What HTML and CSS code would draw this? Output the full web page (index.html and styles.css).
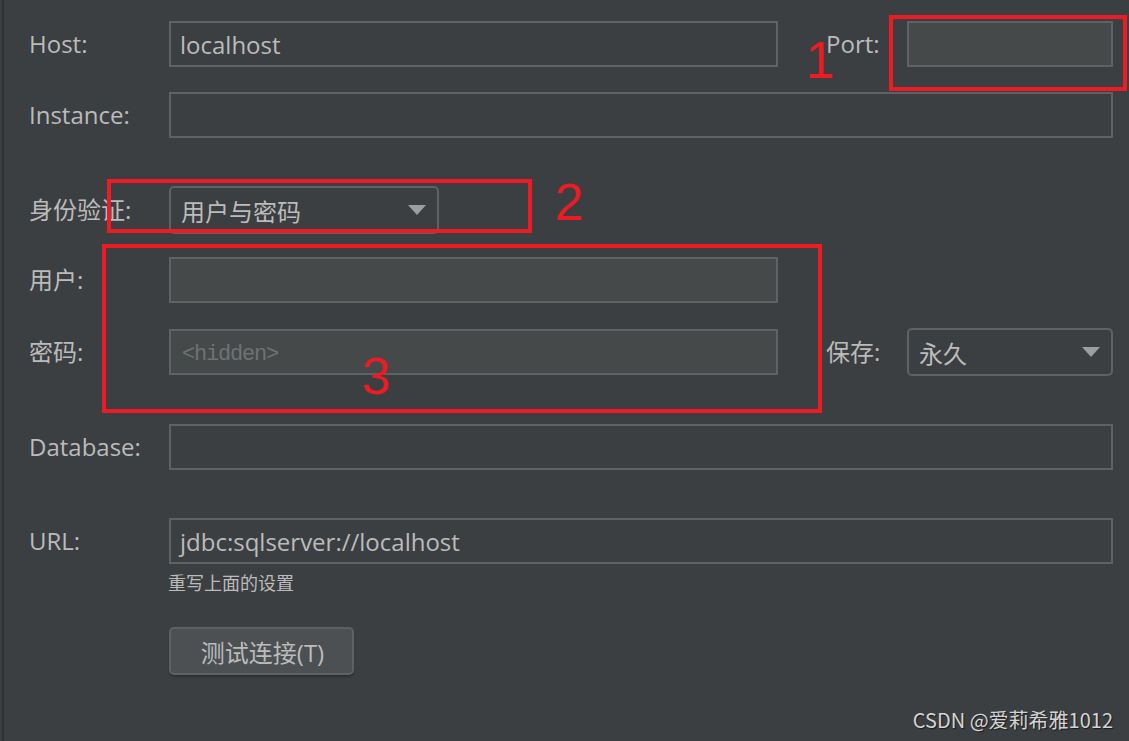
FILE: index.html
```html
<!DOCTYPE html>
<html lang="zh">
<head>
<meta charset="utf-8">
<title>Data source</title>
<link rel="stylesheet" href="styles.css">
</head>
<body>
<div class="panel">
  <div class="row">
    <div class="label">Host:</div>
    <div class="field">localhost</div>
    <div class="label label-right">Port:</div>
    <div class="field field-off"></div>
  </div>
  <div class="row row-near">
    <div class="label">Instance:</div>
    <div class="field span3"></div>
  </div>
  <div class="row row-far">
    <div class="label">身份验证:</div>
    <div class="combo combo-auth">用户与密码<span class="arrow"></span></div>
  </div>
  <div class="row row-near">
    <div class="label">用户:</div>
    <div class="field field-off"></div>
  </div>
  <div class="row row-near">
    <div class="label">密码:</div>
    <div class="field field-off"><span class="placeholder">&lt;hidden&gt;</span></div>
    <div class="label label-right">保存:</div>
    <div class="combo">永久<span class="arrow"></span></div>
  </div>
  <div class="row row-far2">
    <div class="label">Database:</div>
    <div class="field span3"></div>
  </div>
  <div class="row row-far">
    <div class="label">URL:</div>
    <div class="field span3">jdbc:sqlserver://localhost</div>
  </div>
  <div class="hint">重写上面的设置</div>
  <div class="actions">
    <button class="btn" type="button">测试连接(T)</button>
  </div>
</div>

<div class="mark mark-1"></div>
<div class="num num-1">1</div>
<div class="mark mark-2"></div>
<div class="num num-2">2</div>
<div class="mark mark-3"></div>
<div class="num num-3">3</div>

<div class="watermark">CSDN @爱莉希雅1012</div>
</body>
</html>
```

FILE: styles.css
```css
html, body {
  margin: 0;
  padding: 0;
  background: #3c3f41;
  height: 100%;
  overflow: hidden;
}

body {
  font-family: "Open Sans", "Noto Sans CJK SC", sans-serif;
  color: #bbbbbb;
  font-size: 24px;
  position: relative;
}

.panel {
  margin-left: 2px;
  border-left: 2px solid #303234;
  min-height: 741px;
  box-sizing: border-box;
  padding: 21px 0 0 25px;
}

.row {
  display: grid;
  grid-template-columns: 140px 609px 129px 206px;
  align-items: center;
  height: 46px;
}

.row-near { margin-top: 25px; }
.row-far { margin-top: 48px; }
.row-far2 { margin-top: 50px; }

.label {
  white-space: nowrap;
  line-height: 30px;
}

.label-right {
  padding-left: 48px;
}

.field {
  height: 46px;
  box-sizing: border-box;
  border: 2px solid #5f6162;
  background: #3c3f41;
  padding: 0 9px;
  display: flex;
  align-items: center;
  white-space: nowrap;
}

.field-off {
  background: #45494a;
}

.span3 {
  grid-column: 2 / 5;
}

.placeholder {
  font-family: "Liberation Mono", "DejaVu Sans Mono", monospace;
  font-size: 22px;
  letter-spacing: -1.2px;
  color: #6f7274;
  padding-left: 2px;
  padding-top: 4px;
}

.combo {
  height: 48px;
  box-sizing: border-box;
  border: 2px solid #5f6162;
  border-radius: 5px;
  background: #3c3f41;
  padding: 0 10px;
  display: flex;
  align-items: center;
  justify-content: space-between;
}

.combo-auth {
  width: 270px;
}

.arrow {
  width: 0;
  height: 0;
  border-left: 9px solid transparent;
  border-right: 9px solid transparent;
  border-top: 10px solid #9c9fa2;
  margin-right: 1px;
}

.hint {
  margin: 6px 0 0 139px;
  font-size: 18px;
  line-height: 26px;
}

.actions {
  margin: 31px 0 0 140px;
}

.btn {
  width: 185px;
  height: 48px;
  box-sizing: border-box;
  border: 2px solid #5e6163;
  border-radius: 5px;
  background: #4c5052;
  color: #bbbbbb;
  font-family: "Open Sans", "Noto Sans CJK SC", sans-serif;
  font-size: 24px;
  padding: 0 0 0 2px;
  box-shadow: 0 2px 2px rgba(0, 0, 0, 0.25);
}

/* red annotations */
.mark {
  position: absolute;
  border: 4px solid #ed1c24;
  box-sizing: border-box;
}

.mark-1 { left: 889px; top: 15px; width: 238px; height: 76px; }
.mark-2 { left: 107px; top: 179px; width: 425px; height: 54px; }
.mark-3 { left: 102px; top: 244px; width: 720px; height: 169px; }

.num {
  position: absolute;
  font-family: "Liberation Sans", sans-serif;
  font-size: 52px;
  line-height: 52px;
  color: #ed1c24;
  font-weight: normal;
}

.num-1 { left: 806px; top: 34px; }
.num-2 { left: 555px; top: 176px; }
.num-3 { left: 362px; top: 350px; }

.watermark {
  position: absolute;
  right: 16px;
  bottom: 9px;
  font-family: "Noto Sans CJK SC", "DejaVu Sans", sans-serif;
  font-size: 20px;
  line-height: 24px;
  color: #d4d4d4;
  text-shadow: 1px 1px 1px rgba(0, 0, 0, 0.6);
}
```
